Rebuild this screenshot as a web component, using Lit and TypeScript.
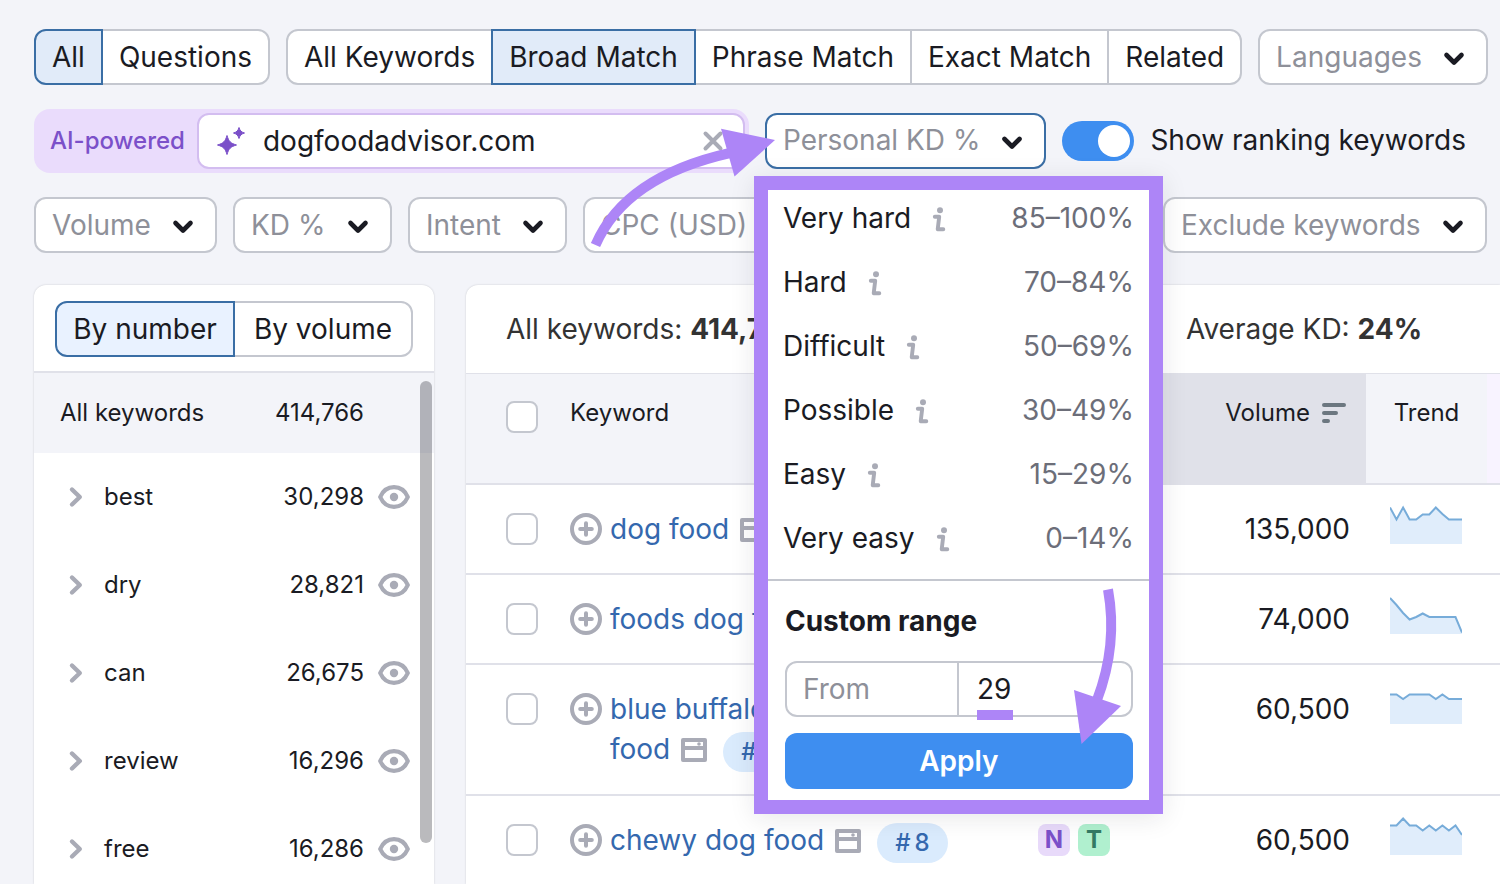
import { LitElement, html, css, svg } from "lit";
import { customElement, property, state } from "lit/decorators.js";
import { classMap } from "lit/directives/class-map.js";

const chevronDown = html`<svg class="chevron" width="32" height="32" viewBox="0 0 32 32" aria-hidden="true">
  <path d="M8.5 14 16 21.500l7.500-7.500" fill="none" stroke="#1a1b23" stroke-width="4.600" stroke-linecap="round" stroke-linejoin="round" />
</svg>`;

const chevronRight = html`<svg width="32" height="32" viewBox="0 0 32 32" aria-hidden="true">
  <path d="M12 8.500 19.800 16 12 23.500" fill="none" stroke="#a9abb6" stroke-width="4.400" stroke-linecap="round" stroke-linejoin="round" />
</svg>`;

const eye = html`<svg width="32" height="32" viewBox="0 0 32 32" aria-hidden="true">
  <path d="M2.200 16C4.800 10 9.900 6.200 16 6.200S27.200 10 29.800 16C27.200 22 22.100 25.800 16 25.800S4.800 22 2.200 16Z" fill="none" stroke="#a9abb6" stroke-width="4.200" stroke-linejoin="round" />
  <circle cx="16" cy="16" r="4.200" fill="#a9abb6" />
</svg>`;

const info = html`<svg width="32" height="32" viewBox="0 0 32 32" aria-hidden="true">
  <circle cx="17" cy="8.200" r="3" fill="#a9abb6" />
  <path d="M11.800 14.700H16.200L14.700 27.200H20.300" fill="none" stroke="#a9abb6" stroke-width="3.900" stroke-linecap="round" stroke-linejoin="round" />
</svg>`;

const plusCircle = html`<svg width="32" height="32" viewBox="0 0 32 32" aria-hidden="true">
  <circle cx="16" cy="16" r="14" fill="none" stroke="#a9abb6" stroke-width="4" />
  <path d="M16 10.200V21.800M10.200 16H21.800" fill="none" stroke="#a9abb6" stroke-width="4" stroke-linecap="round" />
</svg>`;

const serp = html`<svg class="serp" width="26" height="24" viewBox="0 0 26 24" aria-hidden="true">
  <path fill="#a9abb6" fill-rule="evenodd" d="M2 0H24a2 2 0 0 1 2 2V22a2 2 0 0 1-2 2H2a2 2 0 0 1-2-2V2A2 2 0 0 1 2 0ZM4 4V8H22V4ZM4 12V20H22V12Z" />
  <circle cx="18" cy="6" r="1.800" fill="#a9abb6" />
</svg>`;

@customElement("kw-segments")
class KwSegments extends LitElement {
  @property({ type: Array }) items: string[] = [];
  @property({ type: Number }) selected = 0;

  static styles = css`
    :host { display: flex; flex: none; }
    .segment {
      position: relative;
      flex: var(--segment-flex, none);
      height: 56px;
      margin: 0 0 0 -2px;
      padding: 0 16px;
      border: 2px solid #c4c7cf;
      background: #fff;
      color: #1a1b23;
      font: inherit;
      white-space: nowrap;
      cursor: pointer;
    }
    .segment:first-child { margin-left: 0; border-radius: 12px 0 0 12px; }
    .segment:last-child { border-radius: 0 12px 12px 0; }
    .active { z-index: 1; border-color: #3a6ea5; background: var(--active-bg, #e1ebf9); }
  `;

  render() {
    return this.items.map(
      (label, i) => html`<button
        type="button"
        class=${classMap({ segment: true, active: i === this.selected })}
        aria-pressed=${i === this.selected ? "true" : "false"}
        @click=${() => (this.selected = i)}
      >${label}</button>`
    );
  }
}

@customElement("kw-filter")
class KwFilter extends LitElement {
  @property() label = "";

  static styles = css`
    :host { display: block; flex: none; }
    .box {
      box-sizing: border-box;
      display: flex;
      align-items: center;
      gap: 16px;
      height: 56px;
      padding: 0 16px;
      border: 2px solid #c4c7cf;
      border-radius: 12px;
      background: #fff;
    }
    .select {
      appearance: none;
      box-sizing: border-box;
      height: 40px;
      margin: 0;
      padding: 0 0 2px;
      border: 0;
      outline: 0;
      background: none;
      color: #8e9099;
      font: inherit;
    }
    .chevron { display: block; }
  `;

  render() {
    return html`<div class="box">
      <select class="select" aria-label=${this.label}><option>${this.label}</option></select>
      ${chevronDown}
    </div>`;
  }
}

@customElement("kd-picker")
class KdPicker extends LitElement {
  static levels = [
    ["Very hard", "85–100%"],
    ["Hard", "70–84%"],
    ["Difficult", "50–69%"],
    ["Possible", "30–49%"],
    ["Easy", "15–29%"],
    ["Very easy", "0–14%"],
  ];

  static styles = css`
    :host { display: block; position: relative; flex: none; z-index: 5; }
    .trigger {
      display: flex;
      align-items: center;
      gap: 16px;
      height: 56px;
      margin: 0;
      padding: 0 16px;
      border: 2px solid #3a6ea5;
      border-radius: 12px;
      background: #fff;
      color: #8e9099;
      font: inherit;
      white-space: nowrap;
    }
    .text { padding-bottom: 2px; }
    .popup {
      box-sizing: border-box;
      position: absolute;
      top: 63px;
      left: -11px;
      width: 409px;
      border: 14px solid #ad85f7;
      background: #fff;
      box-shadow: 0 4px 24px rgba(25, 27, 35, 0.1);
    }
    .levels { display: grid; gap: 24px; margin: 0; padding: 8px 15px 21px; list-style: none; }
    .level { display: flex; align-items: center; gap: 12px; line-height: 40px; color: #1a1b23; }
    .range { margin-left: auto; color: #6c6e79; }
    .custom { display: grid; gap: 16px; margin: 0; padding: 20px 16px 11px 17px; border: 0; border-top: 2px solid #c4c7cf; }
    .title { margin: 0 0 4px; font-size: 28px; font-weight: 700; line-height: 40px; color: #1a1b23; }
    .fields { display: grid; grid-template-columns: 1fr 1fr; }
    .field {
      box-sizing: border-box;
      width: 100%;
      height: 56px;
      margin: 0;
      padding: 0 16px;
      border: 2px solid #c4c7cf;
      border-radius: 12px 0 0 12px;
      outline: 0;
      background: #fff;
      color: #1a1b23;
      font: inherit;
    }
    .field::placeholder { color: #8e9099; opacity: 1; }
    .to { position: relative; }
    .to .field { border-left: 0; border-radius: 0 12px 12px 0; padding-left: 18px; }
    .mark { position: absolute; left: 18px; bottom: -3px; width: 36px; height: 10px; background: #ad85f7; }
    .apply {
      height: 56px;
      margin: 0;
      border: 0;
      border-radius: 12px;
      background: #3e8ef0;
      color: #fff;
      font: inherit;
      font-weight: 600;
    }
    .arrow { position: absolute; pointer-events: none; fill: #ad85f7; }
    .shaft { fill: none; stroke: #ad85f7; stroke-width: 10; }
    .arrow-in { left: -175px; top: 7px; }
    .arrow-down { left: 302px; top: 395px; }
  `;

  render() {
    return html`
      <button type="button" class="trigger" aria-haspopup="dialog" aria-expanded="true"><span class="text">Personal KD %</span>${chevronDown}</button>
      <div class="popup" role="dialog" aria-label="Personal KD %">
        <ul class="levels">
          ${KdPicker.levels.map(([name, range]) => html`<li class="level"><span>${name}</span>${info}<span class="range">${range}</span></li>`)}
        </ul>
        <form class="custom" @submit=${(e: Event) => e.preventDefault()}>
          <h2 class="title">Custom range</h2>
          <div class="fields">
            <input class="field" type="text" inputmode="numeric" placeholder="From" aria-label="From" />
            <div class="to">
              <input class="field" type="text" inputmode="numeric" .value=${"29"} aria-label="To" />
              <span class="mark"></span>
            </div>
          </div>
          <button class="apply">Apply</button>
        </form>
        <svg class="arrow arrow-down" width="60" height="165" viewBox="1070 585 60 165" aria-hidden="true">
          <path class="shaft" d="M1108 589.500Q1118 645 1097 700" />
          <path d="M1074 690 1121 706 1081.500 744Z" />
        </svg>
      </div>
      <svg class="arrow arrow-in" width="190" height="130" viewBox="590 120 190 130" aria-hidden="true">
        <path class="shaft" d="M595.500 245C612 207 650 171 730 153" />
        <path d="M721 128.700 775 140 734.500 176.500Z" />
      </svg>
    `;
  }
}

@customElement("kw-groups")
class KwGroups extends LitElement {
  static groups = [
    ["best", "30,298"],
    ["dry", "28,821"],
    ["can", "26,675"],
    ["review", "16,296"],
    ["free", "16,286"],
  ];

  static styles = css`
    :host {
      display: flex;
      flex-direction: column;
      flex: none;
      width: 400px;
      position: relative;
      overflow: hidden;
      border-radius: 12px 12px 0 0;
      background: #fff;
      box-shadow: 0 0 2px rgba(25, 27, 35, 0.2);
      font-size: 24px;
      line-height: 32px;
    }
    .head { flex: none; padding: 16px 21px 14px; border-bottom: 2px solid #e0e1e9; font-size: 28px; --active-bg: #e9f2ff; --segment-flex: 1 1 0; }
    .row { display: flex; flex: none; align-items: center; gap: 12px; height: 88px; padding: 0 24px 0 26px; }
    .all { height: 80px; background: #f3f4f9; }
    .count { margin-left: auto; }
    .spacer { width: 34px; }
    .icon { display: block; flex: none; width: 32px; height: 32px; margin: 0; padding: 0; border: 0; background: none; }
    .eye { margin-left: 2px; }
    .scrollbar { position: absolute; top: 96px; right: 2px; bottom: 41px; width: 12px; border-radius: 6px; background: rgba(25, 27, 35, 0.3); }
  `;

  render() {
    return html`
      <div class="head"><kw-segments .items=${["By number", "By volume"]}></kw-segments></div>
      <div class="row all"><span>All keywords</span><span class="count">414,766</span><span class="spacer"></span></div>
      ${KwGroups.groups.map(
        ([name, count]) => html`<div class="row">
          <button type="button" class="icon" aria-label="Expand ${name}">${chevronRight}</button>
          <span>${name}</span>
          <span class="count">${count}</span>
          <button type="button" class="icon eye" aria-label="Hide ${name}">${eye}</button>
        </div>`
      )}
      <div class="scrollbar"></div>
    `;
  }
}

interface Keyword {
  lead: string;
  last: string;
  rank?: string;
  intents?: string[];
  volume: string;
  trend: number[];
}

const keywords: Keyword[] = [
  { lead: "dog ", last: "food", volume: "135,000", trend: [3.5, 15.5, 3.5, 15.5, 15.5, 10.5, 10.5, 3.5, 10, 15.5, 15.5, 15.5] },
  { lead: "foods dog ", last: "food", volume: "74,000", trend: [4, 11, 19, 25.5, 23, 19.5, 23, 23, 23, 23, 23, 38.5] },
  { lead: "blue buffalo dog ", last: "food", rank: "11", volume: "60,500", trend: [10.5, 10.5, 15, 10.5, 10.5, 10.5, 10.5, 15, 10.5, 15, 15, 15] },
  { lead: "chewy dog ", last: "food", rank: "8", intents: ["N", "T"], volume: "60,500", trend: [10.5, 10.5, 3.5, 10.5, 10.5, 15.5, 10.5, 15.5, 10.5, 15.5, 10.5, 20] },
];

@customElement("kw-table")
class KwTable extends LitElement {
  static styles = css`
    :host {
      display: block;
      flex: 1;
      min-width: 0;
      overflow: hidden;
      border-radius: 12px 0 0 0;
      background: #fff;
      box-shadow: 0 0 2px rgba(25, 27, 35, 0.2);
    }
    .summary { display: grid; grid-template-columns: 680px 1fr; padding: 24px 0 24px 40px; border-bottom: 1px solid #e0e1e9; color: #333; line-height: 40px; white-space: nowrap; }
    .table { width: 100%; table-layout: fixed; border-collapse: separate; border-spacing: 0; }
    .c-check { width: 104px; }
    .c-intent { width: 128px; }
    .c-volume { width: 216px; }
    .c-trend { width: 121px; }
    .c-next { width: 13px; }
    .head { height: 86px; padding: 23px 0 0; border-bottom: 2px solid #e0e1e9; background: #f3f4f9; font-size: 24px; font-weight: 400; line-height: 32px; text-align: left; vertical-align: top; }
    .cell { padding: 24px 0; border-bottom: 2px solid #e0e1e9; line-height: 40px; vertical-align: top; }
    .first { padding-left: 40px; }
    .sorted { padding-right: 20px; background: #e0e1e9; text-align: right; }
    .sort { margin-left: 12px; vertical-align: -2px; }
    .head.center { text-align: center; }
    .head.next { background: #f8f3ff; }
    .check { appearance: none; display: block; box-sizing: border-box; width: 32px; height: 32px; margin: 4px 0; border: 2px solid #c4c7cf; border-radius: 8px; background: #fff; }
    .keyword { display: flex; align-items: flex-start; gap: 8px; }
    .add { flex: none; width: 32px; height: 32px; margin: 4px 0; padding: 0; border: 0; background: none; }
    .add svg { display: block; }
    .link { color: #3468ae; text-decoration: none; }
    .tail { display: inline-flex; align-items: flex-start; vertical-align: top; height: 40px; white-space: nowrap; }
    .ranked { height: 41px; }
    .serp { margin: 9px 0 0 11px; }
    .rank { margin: 3px 0 0 16px; padding: 0 18px; border-radius: 20px; background: #daebfd; color: #3468ae; font-size: 24px; font-weight: 500; line-height: 40px; }
    .hash { margin-right: 4px; }
    .intents { display: flex; gap: 8px; padding: 4px 0 4px 16px; }
    .intent { width: 32px; height: 32px; border-radius: 8px; background: #e8dafa; color: #7b50c9; font-size: 24px; font-weight: 700; line-height: 32px; text-align: center; }
    .t { background: #b0f0cf; color: #337a64; }
    .volume { padding-right: 16px; text-align: right; color: #1a1b23; }
    .trend { padding: 19px 0 0 24px; }
    .spark { display: block; }
    .area { fill: #e0edfb; }
    .line { fill: none; stroke: #77acd9; stroke-width: 2; }
  `;

  private spark(values: number[]) {
    const points = values.map((y, i) => `${((i * 72) / (values.length - 1)).toFixed(1)},${y}`).join(" ");
    return html`<svg class="spark" width="72" height="40" viewBox="0 0 72 40" aria-hidden="true">
      ${svg`<polygon class="area" points="0,40 ${points} 72,40" /><polyline class="line" points=${points} />`}
    </svg>`;
  }

  render() {
    return html`
      <div class="summary">
        <span>All keywords: <b>414,766</b></span>
        <span>Average KD: <b>24%</b></span>
      </div>
      <table class="table">
        <colgroup>
          <col class="c-check" /><col /><col class="c-intent" /><col class="c-volume" /><col class="c-trend" /><col class="c-next" />
        </colgroup>
        <thead>
          <tr>
            <th class="head first"><input class="check" type="checkbox" aria-label="Select all keywords" /></th>
            <th class="head">Keyword</th>
            <th class="head"></th>
            <th class="head sorted" aria-sort="descending">Volume<svg class="sort" width="24" height="20" viewBox="0 0 24 20" aria-hidden="true">
                <path d="M2 2H22M2 10H14M2 18H6" fill="none" stroke="#6c7780" stroke-width="4" stroke-linecap="round" />
              </svg></th>
            <th class="head center">Trend</th>
            <th class="head next"></th>
          </tr>
        </thead>
        <tbody>
          ${keywords.map(
            (k) => html`<tr>
              <td class="cell first"><input class="check" type="checkbox" aria-label="Select ${k.lead}${k.last}" /></td>
              <td class="cell">
                <div class="keyword">
                  <button type="button" class="add" aria-label="Add ${k.lead}${k.last}">${plusCircle}</button>
                  <a class="link" href="#">${k.lead}<span class=${classMap({ tail: true, ranked: !!k.rank })}>${k.last}${serp}${k.rank ? html`<span class="rank"><span class="hash">#</span>${k.rank}</span>` : ""}</span></a>
                </div>
              </td>
              <td class="cell"><div class="intents">${(k.intents ?? []).map((c) => html`<span class=${classMap({ intent: true, t: c === "T" })}>${c}</span>`)}</div></td>
              <td class="cell volume">${k.volume}</td>
              <td class="cell trend">${this.spark(k.trend)}</td>
              <td class="cell"></td>
            </tr>`
          )}
        </tbody>
      </table>
    `;
  }
}

@customElement("app-root")
class AppRoot extends LitElement {
  @state() private domain = "dogfoodadvisor.com";

  static styles = css`
    :host {
      box-sizing: border-box;
      display: flex;
      flex-direction: column;
      gap: 24px;
      height: 100vh;
      overflow: hidden;
      padding: 29px 0 0 34px;
      background: #f3f4f9;
      color: #1a1b23;
      font: 400 28px/40px Inter, sans-serif;
    }
    .row { display: flex; align-items: center; gap: 16px; }
    .search { padding-right: 34px; }
    .ai {
      box-sizing: border-box;
      display: flex;
      flex: 1;
      min-width: 0;
      align-items: center;
      gap: 12px;
      padding: 4px 4px 4px 16px;
      border-radius: 16px;
      background: #eadcfc;
    }
    .ai-label { color: #7b50c9; font-size: 24px; font-weight: 500; white-space: nowrap; }
    .field { box-sizing: border-box; display: flex; flex: 1; min-width: 0; align-items: center; gap: 16px; height: 56px; padding: 0 14px 0 16px; border: 2px solid #d3bdf0; border-radius: 12px; background: #fff; }
    .domain { flex: 1; min-width: 0; height: 40px; padding: 0; border: 0; outline: 0; background: none; color: #1a1b23; font: inherit; }
    .clear { flex: none; width: 32px; height: 32px; padding: 0; border: 0; background: none; }
    .toggle { display: flex; flex: none; align-items: center; gap: 16px; white-space: nowrap; }
    .toggle-text { padding-bottom: 2px; }
    .switch { appearance: none; box-sizing: border-box; display: flex; justify-content: flex-end; width: 72px; height: 40px; margin: 0; padding: 4px; border-radius: 20px; background: #3e8ef0; }
    .switch::before { content: ""; width: 32px; height: 32px; border-radius: 16px; background: #fff; }
    .switch:not(:checked) { justify-content: flex-start; background: #a9abb6; }
    .panels { display: flex; flex: 1; min-height: 0; gap: 32px; padding-top: 8px; }
  `;

  render() {
    return html`
      <div class="row">
        <kw-segments .items=${["All", "Questions"]}></kw-segments>
        <kw-segments .items=${["All Keywords", "Broad Match", "Phrase Match", "Exact Match", "Related"]} .selected=${1}></kw-segments>
        <kw-filter label="Languages"></kw-filter>
      </div>
      <div class="row search">
        <div class="ai">
          <label class="ai-label" for="domain">AI-powered</label>
          <div class="field">
            <svg width="32" height="32" viewBox="0 0 32 32" aria-hidden="true">
              <path fill="#7b50c9" d="M12 10.500C13.800 16.500 15.500 18.200 21.500 20 15.500 21.800 13.800 23.500 12 29.500 10.200 23.500 8.500 21.800 2.500 20 8.500 18.200 10.200 16.500 12 10.500ZM24 2.500C25.200 6 26 6.800 29.500 8 26 9.200 25.200 10 24 13.500 22.800 10 22 9.200 18.500 8 22 6.800 22.800 6 24 2.500Z" stroke="#7b50c9" stroke-linejoin="round" />
            </svg>
            <input id="domain" class="domain" type="text" .value=${this.domain} />
            <button type="button" class="clear" aria-label="Clear" @click=${() => (this.domain = "")}>
              <svg width="32" height="32" viewBox="0 0 32 32" aria-hidden="true"><path d="M8.500 8.500 23.500 23.500M23.500 8.500 8.500 23.500" stroke="#a9abb6" stroke-width="4" stroke-linecap="round" /></svg>
            </button>
          </div>
        </div>
        <kd-picker></kd-picker>
        <label class="toggle"><input class="switch" type="checkbox" role="switch" checked /><span class="toggle-text">Show ranking keywords</span></label>
      </div>
      <div class="row">
        ${["Volume", "KD %", "Intent", "CPC (USD)", "Include keywords", "Exclude keywords"].map((label) => html`<kw-filter label=${label}></kw-filter>`)}
      </div>
      <div class="panels">
        <kw-groups></kw-groups>
        <kw-table></kw-table>
      </div>
    `;
  }
}
